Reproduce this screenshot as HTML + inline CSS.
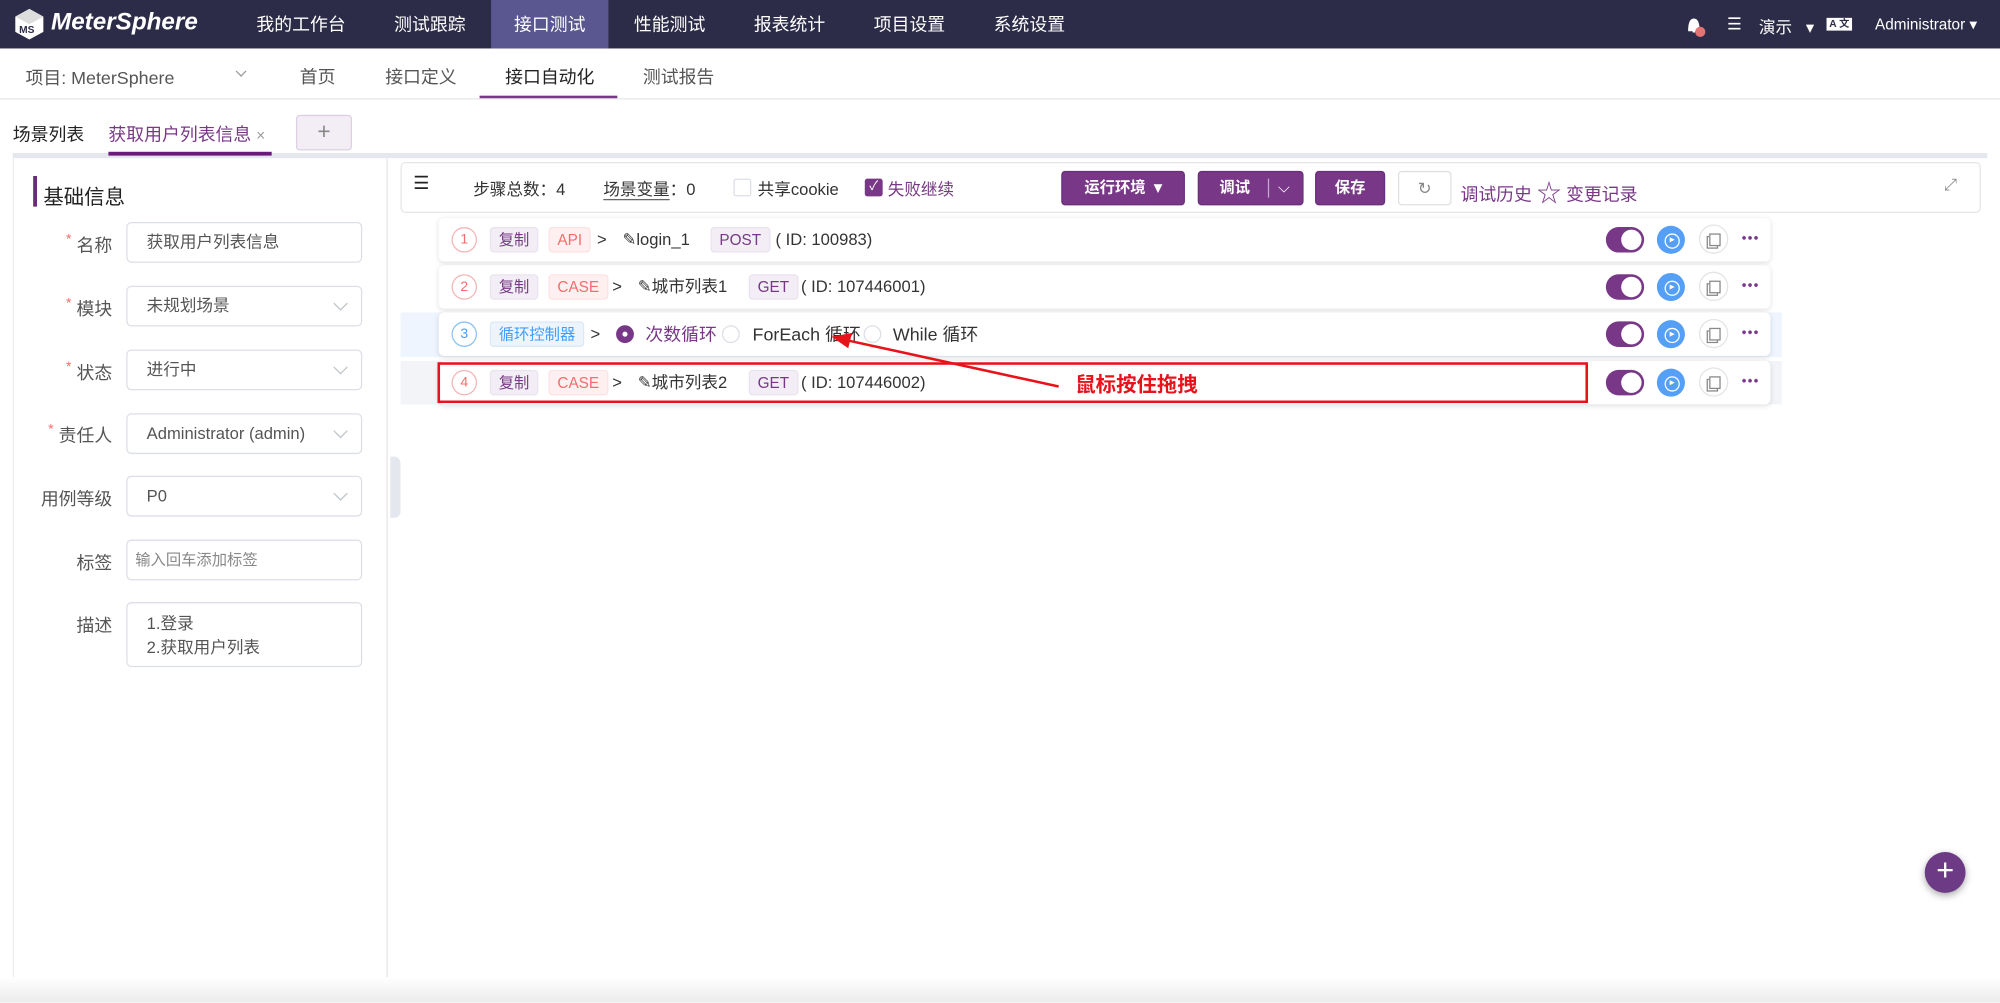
<!DOCTYPE html>
<html><head><meta charset="utf-8">
<style>
*{box-sizing:border-box;margin:0;padding:0}
html,body{width:2000px;height:1003px;overflow:hidden;background:#fff}
body{font-family:"Liberation Sans","Noto Sans CJK SC",sans-serif;color:#333}
#w{position:absolute;left:0;top:0;width:1568px;height:786px;transform:scale(1.27551);transform-origin:0 0;background:#fff}
.a{position:absolute}
.top{left:0;top:0;width:1568px;height:38px;background:#2c2b48}
.nav{top:0;height:38px;line-height:38px;color:#fff;font-size:14px;text-align:center}
.sub{color:#555;font-size:14px;top:50px}
.lbl{font-size:14px;color:#555;text-align:right;width:80px;left:8px}
.lbl i{color:#f56c6c;font-style:normal;font-size:11px;margin-right:4px;vertical-align:top}
.inp{left:99px;width:185px;height:32px;border:1px solid #dcdfe6;border-radius:4px;font-size:13px;color:#555;padding-left:15px;line-height:30px}
.chev{position:absolute;right:12px;top:9px;width:8px;height:8px;border-right:1px solid #c0c4cc;border-bottom:1px solid #c0c4cc;transform:rotate(45deg)}
.btn{top:134px;height:27px;background:#783887;border:1px solid #6a2f7a;border-radius:3px;color:#fff;font-size:12px;font-weight:bold;line-height:25px;text-align:center}
.row{left:344px;width:1044px;height:34px;background:#fff;border-radius:4px;box-shadow:0 1px 4px rgba(0,0,0,.12)}
.row>*{position:absolute;top:7px}
.num{left:10px;top:7px!important;width:20px;height:20px;border-radius:50%;border:1px solid #f5b5b5;color:#f56c6c;font-size:11px;text-align:center;line-height:18px}
.tag{height:20px;line-height:18px;font-size:12px;padding:0 6px;border-radius:3px;border:1px solid #ebe2ef;background:#f3eef5;color:#783887}
.tr{background:#fef0f0;border-color:#fde2e2;color:#f56c6c}
.tx{font-size:13px;color:#333;line-height:20px}
.tog{left:915px;top:7px!important;width:30px;height:20px;border-radius:10px;background:#783887}
.tog:after{content:"";position:absolute;right:2px;top:2px;width:16px;height:16px;border-radius:50%;background:#fff}
.play{left:955px;top:6px!important;width:22px;height:22px;border-radius:50%;background:#559ff6}
.play:before{content:"";position:absolute;left:6px;top:6px;width:10px;height:10px;border:1px solid #fff;border-radius:50%}
.play:after{content:"";position:absolute;left:10px;top:9px;border-left:4px solid #fff;border-top:2.5px solid transparent;border-bottom:2.5px solid transparent}
.cp{left:988px;top:5px!important;width:23px;height:23px;border-radius:50%;border:1px solid #e4e4e4}
.cp:after{content:"";position:absolute;left:7px;top:6px;width:7px;height:8px;border:1px solid #888;box-shadow:-2px 2px 0 -1px #fff,-2px 2px 0 0 #888}
.dots{left:1021px;top:14px!important;width:14px;height:3px;background:radial-gradient(circle,#783887 1.3px,transparent 1.6px) 0 0/4.7px 3px repeat-x}
</style></head><body><div id="w">
<div class="a top"></div>
<div class="a" style="left:385px;top:0;width:92px;height:38px;background:#595690"></div>
<svg class="a" style="left:10px;top:6px" width="26" height="26" viewBox="0 0 26 26"><path d="M13 1 L24 7 L24 19 L13 25 L2 19 L2 7 Z" fill="#fff"/><path d="M13 1 L24 7 L13 13 L2 7Z" fill="#ddd"/><text x="5" y="20" font-size="8" font-weight="bold" fill="#2c2b48" font-family="Liberation Sans">MS</text></svg>
<div class="a" style="left:40px;top:7px;color:#fff;font-size:19px;font-weight:bold;font-style:italic">MeterSphere</div>
<div class="a nav" style="left:190px;width:92px">我的工作台</div>
<div class="a nav" style="left:291px;width:92px">测试跟踪</div>
<div class="a nav" style="left:385px;width:92px">接口测试</div>
<div class="a nav" style="left:479px;width:92px">性能测试</div>
<div class="a nav" style="left:573px;width:92px">报表统计</div>
<div class="a nav" style="left:667px;width:92px">项目设置</div>
<div class="a nav" style="left:761px;width:92px">系统设置</div>
<svg class="a" style="left:1321px;top:12px" width="26" height="18"><path d="M3 12 Q3 3 7 3 Q11 3 11 12 Z M6 13 h2" fill="#fff" stroke="#fff"/><circle cx="12" cy="13" r="4" fill="#e57373"/></svg>
<div class="a" style="left:1354px;top:11px;color:#fff;font-size:13px">☰</div>
<div class="a" style="left:1379px;top:11px;color:#fff;font-size:13px">演示 &nbsp;&nbsp;▾</div>
<div class="a" style="left:1432px;top:14px;width:20px;height:10px;background:#fff;font-size:8px;color:#2c2b48;text-align:center;line-height:10px;font-weight:bold">A 文</div>
<div class="a" style="left:1470px;top:12px;color:#fff;font-size:12px">Administrator ▾</div>

<div class="a" style="left:0;top:77px;width:1568px;height:1px;background:#e6e6e6"></div>
<div class="a sub" style="left:20px;top:51px">项目: MeterSphere</div>
<div class="a" style="left:186px;top:53px;width:6px;height:6px;border-right:1px solid #999;border-bottom:1px solid #999;transform:rotate(45deg)"></div>
<div class="a sub" style="left:235px">首页</div>
<div class="a sub" style="left:302px">接口定义</div>
<div class="a sub" style="left:396px;color:#222">接口自动化</div>
<div class="a" style="left:376px;top:75px;width:108px;height:2px;background:#783887"></div>
<div class="a sub" style="left:504px">测试报告</div>

<div class="a" style="left:10px;top:95px;font-size:14px;color:#222">场景列表</div>
<div class="a" style="left:85px;top:95px;font-size:14px;color:#783887">获取用户列表信息 <span style="color:#999;font-size:12px">×</span></div>
<div class="a" style="left:232px;top:90px;width:44px;height:28px;background:#f3eef5;border:1px solid #ddd0e2;border-radius:3px;color:#888;text-align:center;line-height:24px;font-size:18px">+</div>
<div class="a" style="left:10px;top:120px;width:1548px;height:4px;background:#e4e7ed"></div>
<div class="a" style="left:85px;top:119px;width:128px;height:3px;background:#6a1b7a"></div>

<div class="a" style="left:10px;top:124px;width:294px;height:662px;border-left:1px solid #eee;border-right:1px solid #e6e6e6"></div>
<div class="a" style="left:26px;top:138px;width:3px;height:24px;background:#6a2b7c"></div>
<div class="a" style="left:34px;top:141px;font-size:16px;color:#222">基础信息</div>
<div class="a lbl" style="top:182px"><i>*</i>名称</div><div class="a inp" style="top:174px">获取用户列表信息</div>
<div class="a lbl" style="top:232px"><i>*</i>模块</div><div class="a inp" style="top:224px">未规划场景<span class="chev"></span></div>
<div class="a lbl" style="top:282px"><i>*</i>状态</div><div class="a inp" style="top:274px">进行中<span class="chev"></span></div>
<div class="a lbl" style="top:331px"><i>*</i>责任人</div><div class="a inp" style="top:324px">Administrator (admin)<span class="chev"></span></div>
<div class="a lbl" style="top:381px">用例等级</div><div class="a inp" style="top:373px">P0<span class="chev"></span></div>
<div class="a lbl" style="top:431px">标签</div><div class="a inp" style="top:423px;padding-left:6px;font-size:12px;color:#888">输入回车添加标签</div>
<div class="a lbl" style="top:480px">描述</div><div class="a inp" style="top:472px;height:51px;line-height:19px;padding-top:6px">1.登录<br>2.获取用户列表</div>
<div class="a" style="left:306px;top:358px;width:8px;height:48px;background:#e4e7ed;border-radius:0 5px 5px 0"></div>

<div class="a" style="left:314px;top:127px;width:1239px;height:40px;border:1px solid #e6e6e6;border-radius:4px"></div>
<div class="a" style="left:324px;top:135px;font-size:14px;color:#222">☰</div>
<div class="a" style="left:371px;top:138px;font-size:13px;color:#333">步骤总数：4</div>
<div class="a" style="left:473px;top:138px;font-size:13px;color:#333"><span style="border-bottom:1px solid #666">场景变量</span>：0</div>
<div class="a" style="left:575px;top:140px;width:14px;height:14px;border:1px solid #dcdfe6;border-radius:2px"></div>
<div class="a" style="left:594px;top:138px;font-size:13px;color:#333">共享cookie</div>
<div class="a" style="left:678px;top:140px;width:14px;height:14px;background:#783887;border-radius:2px;color:#fff;font-size:10px;text-align:center;line-height:14px">✓</div>
<div class="a" style="left:696px;top:138px;font-size:13px;color:#783887">失败继续</div>
<div class="a btn" style="left:832px;width:97px">运行环境 &nbsp;▾</div>
<div class="a btn" style="left:939px;width:83px;text-align:left;padding-left:16px">调试<span style="position:absolute;left:54px;top:5px;width:1px;height:15px;background:#c8a8d0"></span><span style="position:absolute;left:62px;font-weight:normal">⌵</span></div>
<div class="a btn" style="left:1031px;width:55px">保存</div>
<div class="a" style="left:1096px;top:134px;width:42px;height:27px;border:1px solid #e0e0e0;border-radius:3px;color:#888;text-align:center;line-height:25px;font-size:13px">↻</div>
<div class="a" style="left:1145px;top:136px;font-size:14px;color:#783887">调试历史 <span style="font-size:19px;position:relative;top:1px">☆</span> 变更记录</div>
<div class="a" style="left:1524px;top:137px;font-size:13px;color:#888">⤢</div>

<div class="a" style="left:314px;top:245px;width:1083px;height:35px;background:#eef5fe"></div>
<div class="a" style="left:314px;top:283px;width:1083px;height:34px;background:#f2f4f8"></div>

<div class="a row" style="top:171px"><div class="num">1</div><div class="tag" style="left:40px">复制</div><div class="tag tr" style="left:86px">API</div><div class="tx" style="left:124px">&gt;</div><div class="tx" style="left:144px">✎login_1</div><div class="tag" style="left:213px">POST</div><div class="tx" style="left:264px">( ID: 100983)</div><div class="tog"></div><div class="play"></div><div class="cp"></div><div class="dots"></div></div>
<div class="a row" style="top:208px"><div class="num">2</div><div class="tag" style="left:40px">复制</div><div class="tag tr" style="left:86px">CASE</div><div class="tx" style="left:136px">&gt;</div><div class="tx" style="left:156px">✎城市列表1</div><div class="tag" style="left:243px">GET</div><div class="tx" style="left:284px">( ID: 107446001)</div><div class="tog"></div><div class="play"></div><div class="cp"></div><div class="dots"></div></div>
<div class="a row" style="top:245px"><div class="num" style="border-color:#8ec3f7;color:#409eff">3</div><div class="tag" style="left:40px;background:#edf4fc;border-color:#dbe9f7;color:#409eff">循环控制器</div><div class="tx" style="left:119px">&gt;</div><div class="a" style="left:139px;top:10px!important;width:14px;height:14px;border-radius:50%;background:#783887"><span style="position:absolute;left:5px;top:5px;width:4px;height:4px;background:#fff;border-radius:50%"></span></div><div class="tx" style="left:162px;color:#783887;font-size:14px">次数循环</div><div class="a" style="left:222px;top:10px!important;width:14px;height:14px;border-radius:50%;border:1px solid #dcdfe6"></div><div class="tx" style="left:246px;font-size:14px">ForEach 循环</div><div class="a" style="left:333px;top:10px!important;width:14px;height:14px;border-radius:50%;border:1px solid #dcdfe6"></div><div class="tx" style="left:356px;font-size:14px">While 循环</div><div class="tog"></div><div class="play"></div><div class="cp"></div><div class="dots"></div></div>
<div class="a row" style="top:283px"><div class="num">4</div><div class="tag" style="left:40px">复制</div><div class="tag tr" style="left:86px">CASE</div><div class="tx" style="left:136px">&gt;</div><div class="tx" style="left:156px">✎城市列表2</div><div class="tag" style="left:243px">GET</div><div class="tx" style="left:284px">( ID: 107446002)</div><div class="tog"></div><div class="play"></div><div class="cp"></div><div class="dots"></div></div>
<div class="a" style="left:343px;top:284px;width:902px;height:32px;border:2px solid #e8131a"></div>
<svg class="a" style="left:0;top:0" width="1568" height="786"><line x1="830" y1="303" x2="665" y2="267" stroke="#e8131a" stroke-width="2"/><path d="M652 264 L668 261 L665 273 Z" fill="#e8131a"/></svg>
<div class="a" style="left:843px;top:288px;font-size:16px;font-weight:bold;color:#e8131a">鼠标按住拖拽</div>

<div class="a" style="left:1509px;top:668px;width:32px;height:32px;border-radius:50%;background:#6d3a85;box-shadow:0 2px 6px rgba(0,0,0,.35);color:#fff;font-size:24px;text-align:center;line-height:30px">+</div>
<div class="a" style="left:0;top:766px;width:1568px;height:20px;background:linear-gradient(#fff,#ececec)"></div>
</div></body></html>
